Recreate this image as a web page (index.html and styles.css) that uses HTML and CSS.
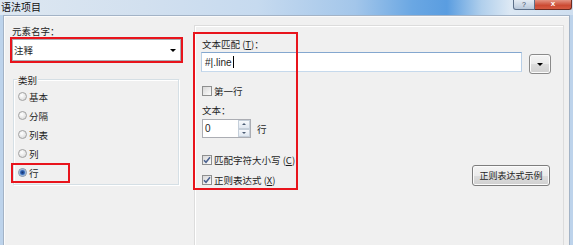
FILE: index.html
```html
<!DOCTYPE html>
<html lang="zh-CN">
<head>
  <meta charset="UTF-8">
  <title>语法项目</title>
  <link rel="stylesheet" href="styles.css">
</head>
<body>
<div class="win">
  <div class="titlebar">
    <span class="title">语法项目</span>
    <div class="caption">
      <span class="btn-help">?</span>
      <span class="btn-close">x</span>
    </div>
  </div>
  <div class="frame">
    <div class="client">
      <div class="left">
        <div class="lbl">元素名字：</div>
        <div class="combo-wrap">
          <div class="combo"><span>注释</span><i class="arrow"></i></div>
        </div>
        <div class="group">
          <div class="group-title">类别</div>
          <div class="radios">
            <div class="radio-row"><i class="radio"></i><span>基本</span></div>
            <div class="radio-row"><i class="radio"></i><span>分隔</span></div>
            <div class="radio-row"><i class="radio"></i><span>列表</span></div>
            <div class="radio-row"><i class="radio"></i><span>列</span></div>
            <div class="radio-row"><i class="radio on"></i><span>行</span></div>
          </div>
        </div>
      </div>

      <div class="right">
        <div class="lbl">文本匹配 (<u>T</u>)：</div>
        <div class="field-row">
          <div class="text-input">#|.line<i class="caret"></i></div>
          <div class="drop-btn"><i class="arrow"></i></div>
        </div>
        <div class="check-row first"><i class="cb"></i><span>第一行</span></div>
        <div class="lbl lbl-text">文本：</div>
        <div class="spin-row">
          <div class="spinner">
            <span class="spin-val">0</span>
            <div class="spin-btns">
              <span class="spin-up"><i></i></span>
              <span class="spin-down"><i></i></span>
            </div>
          </div>
          <span>行</span>
        </div>
        <div class="bottom-row">
          <div class="checks">
            <div class="check-row">
              <i class="cb on"><svg width="8" height="8" viewBox="0 0 8 8"><path d="M1 4.2 L3 6.3 L7 1.2" fill="none" stroke="#4a6290" stroke-width="1.5"/></svg></i>
              <span>匹配字符大小写 (<u>C</u>)</span>
            </div>
            <div class="check-row second">
              <i class="cb on"><svg width="8" height="8" viewBox="0 0 8 8"><path d="M1 4.2 L3 6.3 L7 1.2" fill="none" stroke="#4a6290" stroke-width="1.5"/></svg></i>
              <span>正则表达式 (<u>X</u>)</span>
            </div>
          </div>
          <div class="sample-btn">正则表达式示例</div>
        </div>
      </div>

      <!-- red annotation frames drawn over the dialog -->
      <div class="ann ann-name"></div>
      <div class="ann ann-row"></div>
      <div class="ann ann-text"></div>
    </div>
  </div>
</div>
</body>
</html>
```

FILE: styles.css
```css
*{
  margin: 0;
  padding: 0;
  box-sizing: border-box;
}
body{
  width: 573px;
  height: 245px;
  overflow: hidden;
  background: #bdd3eb;
  font-family: "Noto Sans CJK SC", "Liberation Sans", sans-serif;
  font-size: 9.5px;
  color: #1e1e1e;
}
u{
  text-decoration: underline;
}
.win{
  width: 573px;
  height: 245px;
  display: flex;
  flex-direction: column;
}
.titlebar{
  height: 15px;
  flex: none;
  display: flex;
  align-items: flex-start;
  background: linear-gradient(90deg, #dde7f1 0%, #d2e0ef 25%, #c6daef 45%, #a3c6ea 62%, #6aa7e3 72%, #5a9de0 78%, #b0cfec 84%, #dce8f4 89%, #cfdff0 100%);
}
.title{
  font-size: 10px;
  line-height: 13px;
  padding-left: 1px;
  color: #111;
}
.caption{
  margin-left: auto;
  margin-right: 1px;
  display: flex;
}
.btn-help{
  width: 22px;
  height: 10px;
  border: 1px solid #5c6f88;
  border-top: none;
  border-radius: 0 0 0 3px;
  background: linear-gradient(#e4ebf3, #b9c8da);
  font-family: "Liberation Sans", sans-serif;
  font-size: 7px;
  line-height: 9px;
  text-align: center;
  color: #3a4b63;
}
.btn-close{
  width: 37px;
  height: 10px;
  border: 1px solid #6d2a20;
  border-top: none;
  border-left: none;
  border-radius: 0 0 3px 0;
  background: linear-gradient(#e39483, #cc4a33 60%, #d65b42);
  font-family: "Liberation Sans", sans-serif;
  font-size: 8px;
  font-weight: bold;
  line-height: 8px;
  text-align: center;
  color: #fff;
}
.frame{
  flex: 1;
  display: flex;
  padding: 0 3px;
}
.client{
  flex: 1;
  position: relative;
  display: flex;
  padding: 9px 0 0 6px;
  background: #f0f0f0;
  border: 1px solid #a3b3c6;
  border-bottom: none;
  box-shadow: inset 1px 1px #fbfbfb;
}
.lbl{
  line-height: 12px;
  padding-left: 2px;
}

/* left column */
.left{
  width: 173px;
  flex: none;
}
.combo-wrap{
  height: 26px;
  padding: 2px;
}
.combo{
  height: 22px;
  display: flex;
  align-items: center;
  padding-left: 1px;
  background: #fff;
  border: 1px solid #abadb3;
}
.arrow{
  display: block;
  width: 0;
  height: 0;
  border-left: 3px solid transparent;
  border-right: 3px solid transparent;
  border-top: 3px solid #000;
}
.combo .arrow{
  margin-left: auto;
  margin-right: 4px;
}
.group{
  height: 106px;
  margin: 16px 4px 0 3px;
  padding-left: 3px;
  border: 1px solid #d5dfe5;
  box-shadow: inset 1px 1px #fff, 1px 1px #fff;
}
.group-title{
  width: max-content;
  margin-top: -6px;
  padding: 0 1px;
  line-height: 12px;
  background: #f0f0f0;
}
.radios{
  padding-top: 1px;
}
.radio-row{
  height: 19px;
  display: flex;
  align-items: center;
  gap: 2px;
  padding-left: 1px;
}
.radio{
  display: block;
  width: 9px;
  height: 9px;
  border-radius: 50%;
  border: 1px solid #a2a2a2;
  background: radial-gradient(circle at 40% 35%, #ffffff, #d4d4d4);
}
.radio.on{
  border-color: #7f8fa5;
  background: radial-gradient(circle at 50% 50%, #17346b 0, #2b5db0 1.8px, #7ea6d8 2.8px, #e4ebf3 3.6px);
}

/* right panel */
.right{
  width: 370px;
  flex: none;
  margin-left: 11px;
  padding: 12px 0 0 6px;
  border: 1px solid #dcdcdc;
  border-bottom: none;
  box-shadow: inset 1px 1px #fff;
}
.right .lbl{
  padding-left: 1px;
}
.field-row{
  display: flex;
  align-items: flex-start;
  gap: 7px;
  margin-top: 2px;
}
.text-input{
  width: 321px;
  height: 20px;
  display: flex;
  align-items: center;
  padding-left: 3px;
  background: #fff;
  border: 1px solid;
  border-color: #84a7cf #b9cfe6 #c6d9ec #b9cfe6;
  font-family: "Liberation Sans", sans-serif;
  font-size: 10px;
  color: #222;
}
.caret{
  display: block;
  width: 1px;
  height: 12px;
  margin-left: 1px;
  background: #000;
}
.drop-btn{
  width: 22px;
  height: 20px;
  margin-top: 2px;
  display: flex;
  align-items: center;
  justify-content: center;
  border: 1px solid #8a8a8a;
  border-radius: 3px;
  background: linear-gradient(#f4f4f4 0%, #ebebeb 50%, #dcdcdc 51%, #d0d0d0 100%);
  box-shadow: inset 0 0 0 1px #fbfbfb;
}
.check-row{
  display: flex;
  align-items: center;
  gap: 2px;
  line-height: 12px;
  padding-left: 1px;
}
.check-row.first{
  margin-top: 11px;
}
.check-row.second{
  margin-top: 8px;
}
.cb{
  display: flex;
  align-items: center;
  justify-content: center;
  width: 10px;
  height: 10px;
  border: 1px solid #8e8f8f;
  background: linear-gradient(135deg, #d8d8d8, #fcfcfc);
}
.lbl-text{
  margin-top: 7px;
}
.spin-row{
  display: flex;
  align-items: center;
  gap: 6px;
  margin-top: 3px;
  padding-left: 1px;
}
.spinner{
  width: 49px;
  height: 19px;
  display: flex;
  background: #fff;
  border: 1px solid #abadb3;
}
.spin-val{
  flex: 1;
  padding-left: 2px;
  line-height: 17px;
  font-family: "Liberation Sans", sans-serif;
  font-size: 10px;
}
.spin-btns{
  width: 12px;
  display: flex;
  flex-direction: column;
}
.spin-up,
.spin-down{
  flex: 1;
  display: flex;
  align-items: center;
  justify-content: center;
  border: 1px solid #c5cfda;
  background: linear-gradient(#f7f9fc, #dfe7f0);
}
.spin-up i,
.spin-down i{
  display: block;
  width: 0;
  height: 0;
  border-left: 2px solid transparent;
  border-right: 2px solid transparent;
}
.spin-up i{
  border-bottom: 2px solid #4c5d74;
}
.spin-down i{
  border-top: 2px solid #4c5d74;
}
.bottom-row{
  display: flex;
  align-items: flex-end;
  margin-top: 16px;
}
.sample-btn{
  width: 78px;
  height: 21px;
  margin-left: auto;
  margin-right: 13px;
  display: flex;
  align-items: center;
  justify-content: center;
  border: 1px solid #7d7d7d;
  border-radius: 3px;
  background: linear-gradient(#f4f4f4 0%, #ebebeb 50%, #dddddd 51%, #d0d0d0 100%);
  box-shadow: inset 0 0 0 1px #fbfbfb;
  font-size: 9px;
}

/* annotation frames */
.ann{
  position: absolute;
  border: 2px solid #e8141c;
}
.ann-name{
  left: 6px;
  top: 21px;
  width: 173px;
  height: 26px;
}
.ann-row{
  left: 7px;
  top: 147px;
  width: 59px;
  height: 20px;
}
.ann-text{
  left: 189px;
  top: 16px;
  width: 105px;
  height: 158px;
}
```
